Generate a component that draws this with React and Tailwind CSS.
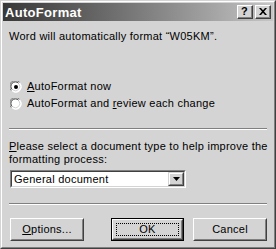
import React from "react";

const font = { fontFamily: '"Liberation Sans", Arial, sans-serif' };

function Radio({ checked }) {
  return (
    <svg width="12" height="12" viewBox="0 0 12 12" className="shrink-0">
      <circle cx="6" cy="6" r="5.5" fill="#ffffff" />
      <path d="M1.2 9.5 A5.5 5.5 0 0 1 9.5 1.2" fill="none" stroke="#808080" strokeWidth="1" />
      <path d="M2.2 8.6 A4.3 4.3 0 0 1 8.6 2.2" fill="none" stroke="#404040" strokeWidth="1" />
      <path d="M9.9 2.2 A5.5 5.5 0 0 1 2.2 9.9" fill="none" stroke="#ffffff" strokeWidth="1" />
      <path d="M9 3 A4.3 4.3 0 0 1 3 9" fill="none" stroke="#d4d4d4" strokeWidth="1" />
      {checked && <circle cx="6" cy="6" r="2" fill="#000000" />}
    </svg>
  );
}

function Button({ children, def, w }) {
  return (
    <div className={`h-[23px] ${w} ${def ? "border border-black" : ""}`}>
      <div className="h-full w-full border border-t-white border-l-white border-r-[#404040] border-b-[#404040]">
        <div className={`h-full w-full border border-t-[#d4d4d4] border-l-[#d4d4d4] border-r-[#808080] border-b-[#808080] ${def ? "p-[2px]" : "flex items-center justify-center"}`}>
          {def ? (
            <div className="h-full w-full border border-dotted border-black flex items-center justify-center">
              {children}
            </div>
          ) : (
            children
          )}
        </div>
      </div>
    </div>
  );
}

function CaptionButton({ children }) {
  return (
    <div className="h-[14px] w-[16px] border border-t-white border-l-white border-r-[#404040] border-b-[#404040] bg-[#d4d4d4]">
      <div className="h-full w-full border-r border-b border-r-[#808080] border-b-[#808080] flex items-center justify-center text-[11px] font-bold leading-none text-black">
        {children}
      </div>
    </div>
  );
}

function Etched() {
  return (
    <div>
      <div className="h-px bg-[#808080]" />
      <div className="h-px bg-white" />
    </div>
  );
}

export default function App() {
  return (
    <div className="w-[276px] h-[249px] bg-[#d4d4d4] text-[11px] tracking-[0.25px] text-black" style={font}>
      <div className="h-full w-full border border-t-[#d4d4d4] border-l-[#d4d4d4] border-r-[#404040] border-b-[#404040]">
        <div className="h-full w-full border border-t-white border-l-white border-r-[#808080] border-b-[#808080] p-px flex flex-col">
          {/* title bar */}
          <div className="h-[18px] flex items-center justify-between pl-[2px] pr-[2px] bg-gradient-to-r from-[#383838] to-[#c6c6c6]">
            <span className="text-white font-bold text-[13px] tracking-[0.3px] leading-none">AutoFormat</span>
            <div className="flex gap-[2px]">
              <CaptionButton>?</CaptionButton>
              <CaptionButton>
                <svg width="8" height="7" viewBox="0 0 8 7">
                  <path d="M0 0h2l2 2.3 2-2.3h2L5 3.5 8 7H6L4 4.7 2 7H0l3-3.5z" fill="#000" />
                </svg>
              </CaptionButton>
            </div>
          </div>

          <div className="flex flex-col px-[6px]">
            <div className="mt-[9px] leading-[13px]">Word will automatically format “W05KM”.</div>

            <div className="mt-[37px] h-[13px] flex items-center gap-[5px] pl-px">
              <Radio checked />
              <span className="leading-[13px]"><u>A</u>utoFormat now</span>
            </div>
            <div className="mt-[4px] h-[13px] flex items-center gap-[5px] pl-px">
              <Radio />
              <span className="leading-[13px]">AutoFormat and <u>r</u>eview each change</span>
            </div>

            <div className="mt-[18px]">
              <Etched />
            </div>

            <div className="mt-[10px] leading-[13px] whitespace-nowrap">
              <u>P</u>lease select a document type to help improve the
              <br />
              formatting process:
            </div>

            <div className="mt-[4px] ml-px w-[176px] h-[18px] border border-t-[#808080] border-l-[#808080] border-r-white border-b-white">
              <div className="h-full w-full border border-t-[#404040] border-l-[#404040] border-r-[#d4d4d4] border-b-[#d4d4d4] bg-white flex items-center">
                <span className="flex-1 pl-[2px] leading-none">General document</span>
                <div className="h-full w-[16px] border border-t-[#d4d4d4] border-l-[#d4d4d4] border-r-[#404040] border-b-[#404040] bg-[#d4d4d4]">
                  <div className="h-full w-full border border-t-white border-l-white border-r-[#808080] border-b-[#808080] flex items-center justify-center">
                    <svg width="7" height="4" viewBox="0 0 7 4">
                      <path d="M0 0h7L3.5 4z" fill="#000" />
                    </svg>
                  </div>
                </div>
              </div>
            </div>

            <div className="mt-[15px]">
              <Etched />
            </div>

            <div className="mt-[13px] flex pl-px">
              <Button w="w-[74px]"><span><u>O</u>ptions...</span></Button>
              <div className="ml-[27px]">
                <Button def w="w-[73px]">OK</Button>
              </div>
              <div className="ml-[9px]">
                <Button w="w-[74px]">Cancel</Button>
              </div>
            </div>
          </div>
        </div>
      </div>
    </div>
  );
}
